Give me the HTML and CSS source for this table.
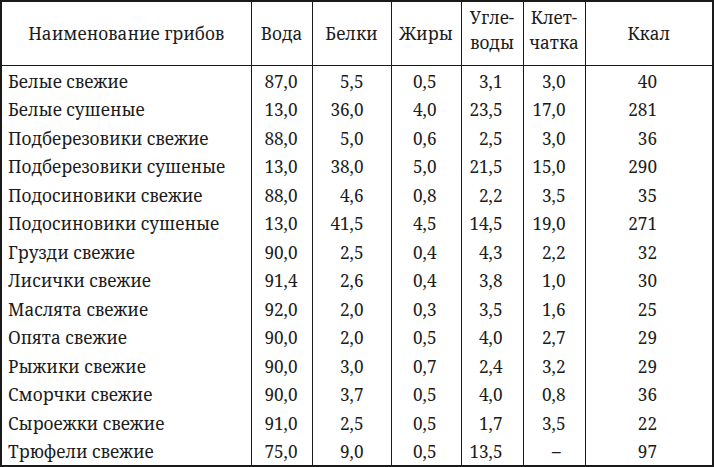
FILE: index.html
```html
<!DOCTYPE html>
<html lang="ru">
<head>
<meta charset="utf-8">
<link rel="stylesheet" href="styles.css">
</head>
<body>
<table class="tbl">
  <colgroup>
    <col class="c-name"><col class="c-water"><col class="c-prot"><col class="c-fat"><col class="c-carb"><col class="c-fib"><col class="c-kcal">
  </colgroup>
  <thead>
    <tr>
      <th>Наименование грибов</th>
      <th>Вода</th>
      <th>Белки</th>
      <th>Жиры</th>
      <th class="two">Угле-<br>воды</th>
      <th class="two">Клет-<br>чатка</th>
      <th>Ккал</th>
    </tr>
  </thead>
  <tbody>
    <tr><td>Белые свежие</td><td>87,0</td><td>5,5</td><td>0,5</td><td>3,1</td><td>3,0</td><td>40</td></tr>
    <tr><td>Белые сушеные</td><td>13,0</td><td>36,0</td><td>4,0</td><td>23,5</td><td>17,0</td><td>281</td></tr>
    <tr><td>Подберезовики свежие</td><td>88,0</td><td>5,0</td><td>0,6</td><td>2,5</td><td>3,0</td><td>36</td></tr>
    <tr><td>Подберезовики сушеные</td><td>13,0</td><td>38,0</td><td>5,0</td><td>21,5</td><td>15,0</td><td>290</td></tr>
    <tr><td>Подосиновики свежие</td><td>88,0</td><td>4,6</td><td>0,8</td><td>2,2</td><td>3,5</td><td>35</td></tr>
    <tr><td>Подосиновики сушеные</td><td>13,0</td><td>41,5</td><td>4,5</td><td>14,5</td><td>19,0</td><td>271</td></tr>
    <tr><td>Грузди свежие</td><td>90,0</td><td>2,5</td><td>0,4</td><td>4,3</td><td>2,2</td><td>32</td></tr>
    <tr><td>Лисички свежие</td><td>91,4</td><td>2,6</td><td>0,4</td><td>3,8</td><td>1,0</td><td>30</td></tr>
    <tr><td>Маслята свежие</td><td>92,0</td><td>2,0</td><td>0,3</td><td>3,5</td><td>1,6</td><td>25</td></tr>
    <tr><td>Опята свежие</td><td>90,0</td><td>2,0</td><td>0,5</td><td>4,0</td><td>2,7</td><td>29</td></tr>
    <tr><td>Рыжики свежие</td><td>90,0</td><td>3,0</td><td>0,7</td><td>2,4</td><td>3,2</td><td>29</td></tr>
    <tr><td>Сморчки свежие</td><td>90,0</td><td>3,7</td><td>0,5</td><td>4,0</td><td>0,8</td><td>36</td></tr>
    <tr><td>Сыроежки свежие</td><td>91,0</td><td>2,5</td><td>0,5</td><td>1,7</td><td>3,5</td><td>22</td></tr>
    <tr><td>Трюфели свежие</td><td>75,0</td><td>9,0</td><td>0,5</td><td>13,5</td><td class="dash">–</td><td>97</td></tr>
  </tbody>
</table>
</body>
</html>
```
FILE: styles.css
```css
html, body {
  margin: 0;
  padding: 0;
  background: #fff;
}
body {
  font-family: "Noto Serif", "Liberation Serif", serif;
  color: #1c1c1c;
  font-size: 17.2px;
}
.tbl {
  border-collapse: collapse;
  table-layout: fixed;
  width: 713px;
  border: 2px solid #1a1a1a;
  font-size: 17.2px;
}
.c-name { width: 250px; }
.c-water { width: 61px; }
.c-prot { width: 79px; }
.c-fat { width: 70px; }
.c-carb { width: 62px; }
.c-fib { width: 62px; }
.c-kcal { width: 128px; }

.tbl th {
  height: 63px;
  font-weight: normal;
  text-align: center;
  vertical-align: middle;
  padding: 0;
  border-left: 1.5px solid #1a1a1a;
  border-bottom: 1.5px solid #1a1a1a;
  line-height: 25px;
}
.tbl th.two {
  height: 55px;
  padding-bottom: 8px;
}
.tbl td {
  height: 26px;
  padding: 2.5px 0 0;
  line-height: 26px;
  text-align: right;
  border-left: 1.5px solid #1a1a1a;
  white-space: nowrap;
}
.tbl td:nth-child(1) { text-align: left; padding-left: 6px; }
.tbl td:nth-child(2) { padding-right: 14px; }
.tbl td:nth-child(3) { padding-right: 27px; }
.tbl td:nth-child(4) { padding-right: 24px; }
.tbl td:nth-child(5) { padding-right: 20px; }
.tbl td:nth-child(6) { padding-right: 19px; }
.tbl td:nth-child(7) { padding-right: 55px; }
.tbl td.dash { padding-right: 24px; }
```
